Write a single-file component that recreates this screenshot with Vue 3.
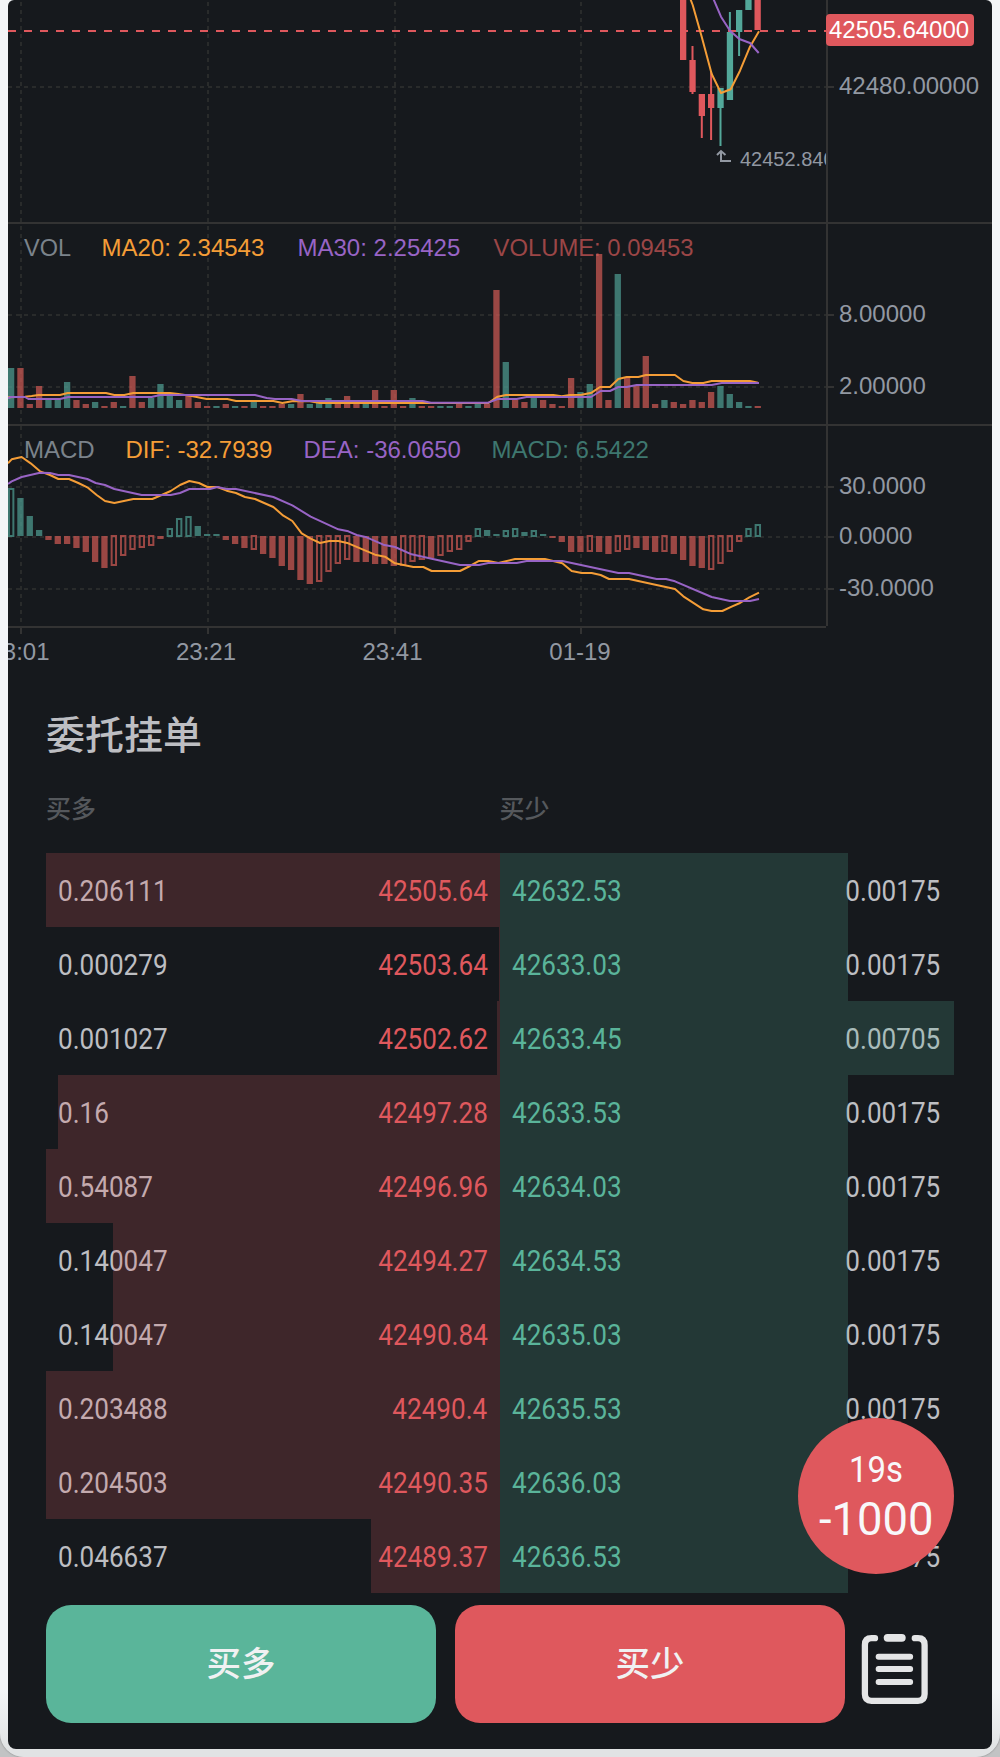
<script setup>
const STEP = 9.3333
const barX = (i) => 17.3 + (i - 1) * STEP

// colour + height per bar
const volumes = `g40 r40 r4 r22 g8 g8 g26 r8 r4 g6 r2 r6 g2 r32 r6 g10 g24 g12 g8 r12
r6 r2 g2 r4 g2 r2 g6 r2 r2 r4 g4 r14 g4 g5 g10 r4 r12 r4 g4 r18
r2 r18 r2 g10 r2 r2 g2 g2 r4 g2 g4 r4 r118 g46 r8 r6 g10 r8 r4 r2
r30 g16 g24 r154 r8 g134 r30 r22 r52 r4 g8 r6 r4 r8 r6 r16 g22 g14 g6 g2 r2`
  .split(/\s+/)
  .map((s, i) => ({ c: s[0], h: +s.slice(1), x: barX(i) }))

// trailing "o" marks a hollow bar
const macd = `g47o g38 g20 g6 r4 r8 r8 r12 r16 r26 r32 r29o r19o r13o r11o r9o r3 g7o g17o g19o
g10 g2 g2 r4 r8 r12 r13o r18 r22 r30 r34 r44 r48 r45o r35o r27o r23o r26 r26 r28
r28 r30 r29o r25o r23o r22 r19o r15o r13o r5o g7o g6 g2 g5o g7o g4 g5o g2 r2 r6
r16 r16 r15o r16 r18 r15o r13o r12 r14 r16 r15o r18 r24 r30 r32 r33o r27o r15o r5o g7o g11o`
  .split(/\s+/)
  .map((s, i) => {
    const hollow = s.endsWith('o')
    const h = parseInt(s.slice(1))
    const up = s[0] === 'g'
    return { c: s[0], hollow, h, x: barX(i), y: up ? 536 - h : 536 }
  })

const candles = [
  { x: 680, c: 'r', top: -4, bottom: 60, hi: -4, lo: 60 },
  { x: 689.4, c: 'r', top: 60, bottom: 92, hi: 46, lo: 94 },
  { x: 698.7, c: 'r', top: 94, bottom: 116, hi: 94, lo: 138 },
  { x: 708, c: 'r', top: 94, bottom: 108, hi: 72, lo: 140 },
  { x: 717.4, c: 'g', top: 88, bottom: 108, hi: 88, lo: 146 },
  { x: 726.8, c: 'g', top: 32, bottom: 100, hi: 12, lo: 100 },
  { x: 736, c: 'g', top: 10, bottom: 32, hi: 10, lo: 56 },
  { x: 745.3, c: 'g', top: -4, bottom: 10, hi: -4, lo: 10 },
  { x: 754.5, c: 'r', top: -4, bottom: 30, hi: -4, lo: 30 },
]

const vGrid = [21, 208, 395, 581]
const hGrid = [87, 315, 387, 487, 537, 589]
const axis = [
  ['42480.00000', 94],
  ['8.00000', 322],
  ['2.00000', 394],
  ['30.0000', 494],
  ['0.0000', 544],
  ['-30.0000', 596],
]
const times = [
  ['23:01', 19.5],
  ['23:21', 206],
  ['23:41', 392.5],
  ['01-19', 580],
]

const bids = [
  ['0.206111', '42505.64', 454],
  ['0.000279', '42503.64', 1],
  ['0.001027', '42502.62', 3],
  ['0.16', '42497.28', 442],
  ['0.54087', '42496.96', 454],
  ['0.140047', '42494.27', 387],
  ['0.140047', '42490.84', 387],
  ['0.203488', '42490.4', 454],
  ['0.204503', '42490.35', 454],
  ['0.046637', '42489.37', 129],
]
const asks = [
  ['42632.53', '0.00175', 348],
  ['42633.03', '0.00175', 348],
  ['42633.45', '0.00705', 454],
  ['42633.53', '0.00175', 348],
  ['42634.03', '0.00175', 348],
  ['42634.53', '0.00175', 348],
  ['42635.03', '0.00175', 348],
  ['42635.53', '0.00175', 348],
  ['42636.03', '0.00175', 348],
  ['42636.53', '0.00175', 348],
]
</script>

<template>
  <div class="page">
    <div class="frame">
      <main class="screen">
        <svg class="chart" width="984" height="684" viewBox="8 0 984 684">
          <defs>
            <clipPath id="plot"><rect x="8" y="0" width="818" height="684" /></clipPath>
          </defs>
          <g class="grid">
            <line v-for="x in vGrid" :key="x" :x1="x" y1="2" :x2="x" y2="626" />
            <line v-for="y in hGrid" :key="y" x1="8" :y1="y" x2="826" :y2="y" />
          </g>
          <g class="rule">
            <path d="M8 223H992M8 425H992M8 627H826M827 0V626" />
            <path v-for="y in hGrid" :key="y" :d="`M828 ${y}h6`" />
            <path v-for="x in vGrid" :key="x" :d="`M${x} 628v6`" />
          </g>

          <g clip-path="url(#plot)">
            <g v-for="k in candles" :key="k.x" :class="'solid-' + k.c">
              <rect :x="k.x" :y="k.top" width="6.3" :height="k.bottom - k.top" />
              <rect :x="k.x + 2.1" :y="k.hi" width="2" :height="k.lo - k.hi" />
            </g>
            <path class="price-line" d="M8 31H826" />
            <polyline class="line orange" points="690,-2 692.7,5 701.7,36.7 711.7,74 721,93 730.7,89.3 740,70.7 750,46.7 759,31.3" />
            <polyline class="line purple" points="713,-2 721,16.7 730,30.7 739.3,39 750,43 758.7,53" />
            <path class="arrow" d="M717 155L721 151L725.5 155M721 151V161H731" />
            <text class="low" x="740" y="166">42452.84000</text>

            <g class="text">
              <text class="muted" x="24" y="256" textLength="47" lengthAdjust="spacingAndGlyphs">VOL</text>
              <text class="orange-t" x="101.5" y="256">MA20: 2.34543</text>
              <text class="purple-t" x="297.5" y="256">MA30: 2.25425</text>
              <text class="red-t" x="493.5" y="256" textLength="200" lengthAdjust="spacingAndGlyphs">VOLUME: 0.09453</text>
            </g>
            <g class="dim">
              <rect v-for="(b, i) in volumes" :key="i" :class="'solid-' + b.c" :x="b.x" :y="408 - b.h" width="6.3" :height="b.h" />
            </g>
            <g transform="translate(0 210) scale(.33333)">
              <polyline class="line wide orange" points="24,562 75,560 95,558 115,555 180,555 203,549 318,549 343,555 373,555 400,549 510,549 535,552 575,558 620,567 682,567 708,573 820,573 847,579 880,573 930,574 960,579 1465,579 1493,560 1518,555 1660,555 1685,559 1710,555 1745,554 1775,548 1800,531 1830,531 1855,507 1880,501 1915,501 1938,495 2025,495 2050,513 2077,519 2110,519 2135,513 2250,513 2274,518" />
              <polyline class="line wide purple" points="24,564 33,561 75,561 85,567 180,567 205,561 455,561 480,555 765,555 800,564 825,567 875,567 905,573 1268,573 1293,578 1465,578 1493,567 1550,567 1580,561 1773,561 1802,543 1830,543 1855,531 1880,531 1910,525 2135,525 2165,519 2277,519" />
            </g>

            <g class="text">
              <text class="muted" x="24" y="458">MACD</text>
              <text class="orange-t" x="125.5" y="458">DIF: -32.7939</text>
              <text class="purple-t" x="303.5" y="458">DEA: -36.0650</text>
              <text class="green-t" x="491.5" y="458">MACD: 6.5422</text>
            </g>
            <g class="dim">
              <template v-for="(b, i) in macd" :key="i">
                <rect v-if="b.hollow" :class="'hollow-' + b.c" :x="b.x + 1" :y="b.y" width="4.4" :height="b.h" />
                <rect v-else :class="'solid-' + b.c" :x="b.x" :y="b.y" width="6.3" :height="b.h" />
              </template>
            </g>
            <g transform="translate(0 420) scale(.33333)">
              <polyline class="line wide orange" points="24,130 35,118 65,111 92,130 120,154 150,165 175,177 207,177 235,189 262,202 290,225 315,243 343,249 400,237 457,237 485,225 512,213 540,195 568,183 597,189 622,201 652,201 680,212 708,219 735,231 765,237 820,261 850,287 877,303 905,340 932,356 960,369 988,363 1015,363 1045,370 1125,404 1155,410 1185,430 1240,441 1270,441 1295,453 1380,453 1410,438 1437,423 1465,423 1495,429 1545,417 1635,417 1687,430 1715,453 1745,459 1775,459 1802,465 1827,477 1887,477 1980,497 2025,507 2050,529 2110,568 2135,573 2167,573 2195,560 2220,549 2248,532 2277,518" />
              <polyline class="line wide purple" points="24,192 35,184 65,171 120,158 150,159 175,165 207,165 262,177 287,189 315,195 343,207 425,225 512,225 540,219 568,207 630,207 652,201 680,207 708,207 820,231 877,256 932,290 1015,328 1045,334 1070,345 1100,352 1150,374 1185,381 1235,403 1295,416 1380,435 1437,435 1465,429 1550,429 1580,423 1687,423 1855,459 1887,459 1970,477 1998,477 2025,484 2135,531 2190,543 2250,543 2277,537" />
            </g>
          </g>

          <g class="text axis">
            <text v-for="a in axis" :key="a[0]" x="839" :y="a[1]">{{ a[0] }}</text>
            <text v-for="t in times" :key="t[0]" :x="t[1]" y="660" text-anchor="middle">{{ t[0] }}</text>
          </g>
          <rect class="solid-r" x="826" y="14" width="148" height="32" rx="4" />
          <text class="text tag" x="829" y="38">42505.64000</text>
        </svg>

        <section class="orders">
          <h2>委托挂单</h2>
          <div class="heads"><span>买多</span><span>买少</span></div>
          <div class="book">
            <div class="col bids">
              <div v-for="(r, i) in bids" :key="i" class="row">
                <span class="num left">{{ r[0] }}</span>
                <span class="num right price">{{ r[1] }}</span>
                <i class="depth" :style="{ width: r[2] + 'px' }"></i>
              </div>
            </div>
            <div class="col asks">
              <div v-for="(r, i) in asks" :key="i" class="row">
                <span class="num left price">{{ r[0] }}</span>
                <span class="num right">{{ r[1] }}</span>
                <i class="depth" :style="{ width: r[2] + 'px' }"></i>
              </div>
            </div>
          </div>
        </section>

        <footer class="actions">
          <button class="btn buy">买多</button>
          <button class="btn sell">买少</button>
          <svg class="list" width="68" height="72" viewBox="862 1633 68 72">
            <path d="M876 1638.2H872.5Q865.9 1638.2 865.9 1645V1694Q865.9 1700.8 872.5 1700.8H919Q925.6 1700.8 925.6 1694V1645Q925.6 1638.2 919 1638.2H915.8" />
            <path class="clip" d="M888.6 1637.8H902.8" />
            <path class="rows" d="M879.6 1656.8H911.2M879.6 1669H911.2M879.6 1682H911.2" />
          </svg>
        </footer>

        <div class="timer">
          <svg width="156" height="156" viewBox="0 0 156 156">
            <text x="51" y="64.3" font-size="36" textLength="54" lengthAdjust="spacingAndGlyphs">19s</text>
            <text x="21" y="117.3" font-size="46.5" textLength="114.5" lengthAdjust="spacingAndGlyphs">-1000</text>
          </svg>
        </div>
      </main>
    </div>
  </div>
</template>

<style>
body { background: #c2c3c4; }
</style>

<style scoped>
.page { width: 1000px; height: 1757px; overflow: hidden; background: #c2c3c4; }
.frame {
  box-sizing: border-box;
  height: 1757px;
  padding: 0 8px 8px;
  border-radius: 0 0 24px 24px;
  background: linear-gradient(#f3f5f7 0, #f3f5f7 1690px, #e1e3e4 1750px);
  box-shadow: 0 0 2px #777;
}
.screen {
  position: relative;
  display: flex;
  flex-direction: column;
  height: 1749px;
  border-radius: 6px 6px 8px 8px;
  background: #16191d;
  overflow: hidden;
  font-family: "Noto Sans CJK SC", sans-serif;
}
.chart { display: block; flex: none; }
.grid line { stroke: #292b2b; stroke-width: 2; stroke-dasharray: 4 4; }
.rule path { stroke: #333333; stroke-width: 2; }
.solid-r { fill: #df585d; }
.solid-g { fill: #53a89a; }
.hollow-r, .hollow-g { fill: none; stroke-width: 2; }
.dim { opacity: .7; }
.dim .solid-r { fill: #d25b55; }
.dim .solid-g { fill: #4f9f94; }
.hollow-r { stroke: #d25b55; }
.hollow-g { stroke: #4f9f94; }
.price-line { stroke: #df585d; stroke-width: 2; stroke-dasharray: 8 8; }
.line { fill: none; stroke-width: 2; stroke-linejoin: round; }
.wide { stroke-width: 6; }
.orange { stroke: #f49d37; }
.purple { stroke: #9864c5; }
.arrow { fill: none; stroke: #9298a2; stroke-width: 2; }
.text, .low { font-family: "Liberation Sans", Arial, sans-serif; font-size: 24px; }
.low { font-size: 20px; fill: #9298a2; }
.axis { fill: #9298a2; }
.tag { fill: #fff; }
.muted { fill: #7b838b; }
.orange-t { fill: #f49d37; }
.purple-t { fill: #9864c5; }
.red-t { fill: #9b4647; }
.green-t { fill: #3e776f; }

.orders { padding: 0 38px; }
h2 {
  margin: 18.5px 0 0;
  font-size: 39px;
  line-height: 58px;
  font-weight: 500;
  color: #bdbec2;
}
.heads {
  display: flex;
  height: 92.5px;
  font-size: 25px;
  font-weight: 500;
  line-height: 93px;
  color: #55585c;
}
.heads span { width: 453.5px; }
.book { display: flex; }
.col { width: 454px; }
.row {
  position: relative;
  display: flex;
  justify-content: space-between;
  height: 74px;
  padding: 0 12px;
  line-height: 77px;
}
.num {
  font-family: Roboto, sans-serif;
  font-size: 29.5px;
  color: #bdbec2;
  transform: scaleX(.885);
}
.left { transform-origin: left; }
.right { transform-origin: right; margin-right: 0.5px; }
.asks .right { margin-right: 1.5px; }
.bids .price { color: #df585d; }
.asks .price { color: #5ab59a; }
.depth { position: absolute; top: 0; bottom: 0; opacity: .2; }
.bids .depth { right: 0; background: #df585d; }
.asks .depth { left: 0; background: #5ab59a; }

.actions { display: flex; align-items: center; margin-top: 12px; padding: 0 38px; }
.btn {
  width: 390px;
  height: 118px;
  margin: 0 19px 0 0;
  padding: 0 0 6px;
  border: 0;
  border-radius: 25px;
  font: 500 34.5px "Noto Sans CJK SC", sans-serif;
  color: #f0f1f2;
}
.buy { background: #5ab59a; }
.sell { background: #df585d; margin-right: 16px; }
.list { margin-top: 10px; fill: none; stroke: #e4e5e6; stroke-width: 6.3; stroke-linecap: round; }
.list .clip { stroke-width: 7.8; }
.list .rows { stroke-width: 5.9; }

.timer {
  position: absolute;
  left: 790px;
  top: 1417.7px;
  width: 156px;
  height: 156px;
  border-radius: 50%;
  background: #df585d;
}
.timer svg { display: block; }
.timer text { font-family: Roboto, sans-serif; fill: #f8f8fa; }
</style>
